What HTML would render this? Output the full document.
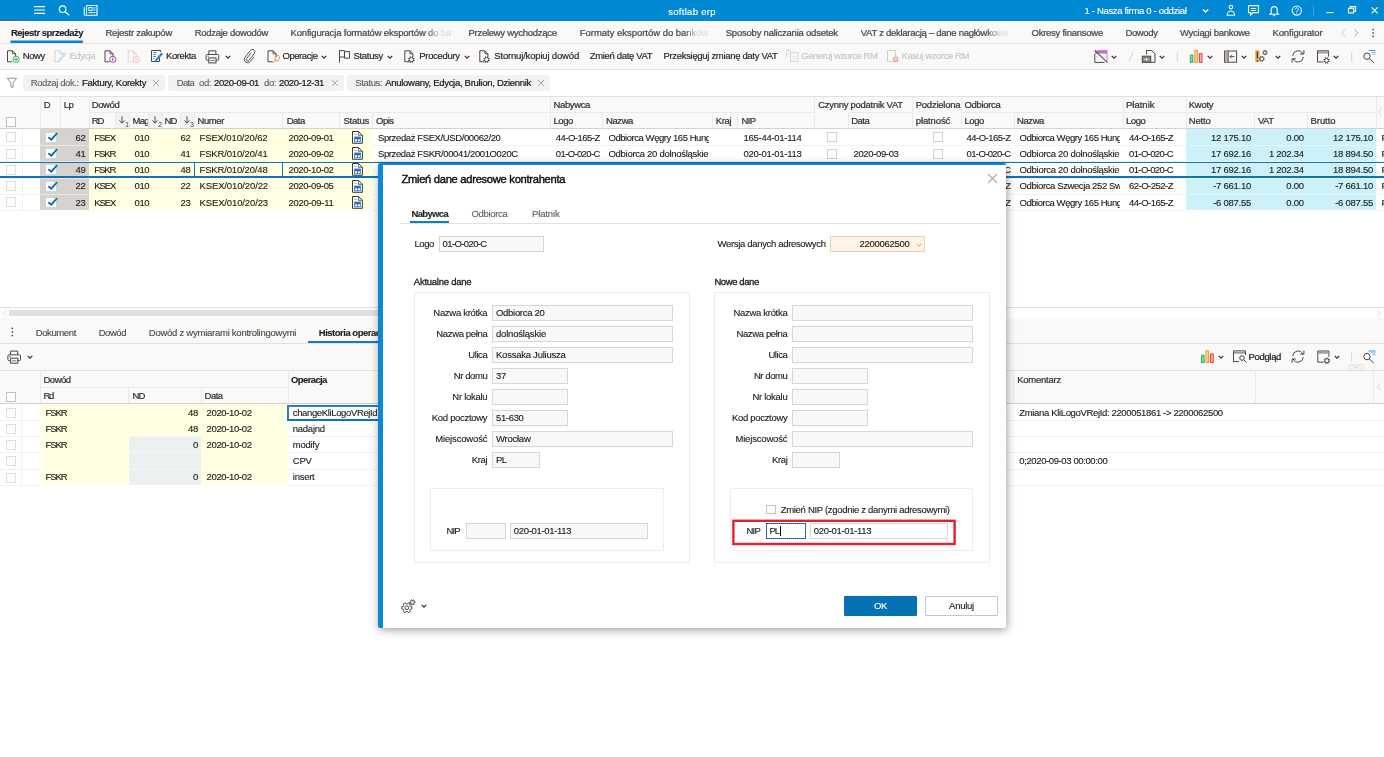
<!DOCTYPE html>
<html lang="pl"><head><meta charset="utf-8"><title>softlab erp</title>
<style>
html,body{margin:0;padding:0}
body{will-change:transform;width:1384px;height:757px;position:relative;overflow:hidden;background:#fff;font:9.5px "Liberation Sans",sans-serif;color:#1b1a19}
.a{position:absolute;box-sizing:border-box}
.t{position:absolute;white-space:nowrap;line-height:12px;height:12px;-webkit-text-stroke:0.12px currentColor}
.m{-webkit-text-stroke:0.22px currentColor}
.g{color:#605e5c}
.d{color:#c2c0be}
.w{color:#fff}
.in{border:1px solid #d8d6d4;background:#f8f8f8}
.cb{border:1px solid #c8c6c4;background:#fff}
</style></head>
<body>
<div class="a " style="left:0px;top:0px;width:1384px;height:21px;background:#0089d2;"></div>
<div class="a " style="left:0px;top:20px;width:27px;height:1px;background:#4a6478;"></div>
<div class="a " style="left:0px;top:21px;width:1384px;height:49px;background:#faf9f8;"></div>
<div class="a " style="left:0px;top:43px;width:1384px;height:1px;background:#e3e1df;"></div>
<div class="a " style="left:0px;top:69px;width:1384px;height:1px;background:#e3e1df;"></div>
<span class="t w" style="letter-spacing:0.294px;left:640px;width:104px;text-align:center;top:5.5px;">softlab erp</span>
<span class="t w" style="letter-spacing:-0.329px;left:1084.5px;top:5.4px;">1 - Nasza firma 0 - oddział</span>
<span class="t " style="letter-spacing:-0.517px;font-weight:bold;left:11px;top:26.7px;color:#201f1e">Rejestr sprzedaży</span>
<svg class="a" style="left:9px;top:39px;" width="78" height="6" viewBox="0 0 78 6"><rect x="1.3" y="1.4" width="72.8" height="2.6" rx="0.9" fill="#0a84d0"/></svg>
<span class="t m" style="letter-spacing:-0.248px;left:105.5px;top:26.7px;color:#484644">Rejestr zakupów</span>
<span class="t m" style="letter-spacing:-0.292px;left:194.75px;top:26.7px;color:#484644">Rodzaje dowodów</span>
<span class="t m" style="letter-spacing:-0.274px;left:468.5px;top:26.7px;color:#484644">Przelewy wychodzące</span>
<span class="t m" style="letter-spacing:-0.222px;left:725.75px;top:26.7px;color:#484644">Sposoby naliczania odsetek</span>
<span class="t m" style="letter-spacing:-0.250px;left:1031.5px;top:26.7px;color:#484644">Okresy finansowe</span>
<span class="t m" style="letter-spacing:-0.387px;left:1125.5px;top:26.7px;color:#484644">Dowody</span>
<span class="t m" style="letter-spacing:-0.273px;left:1180px;top:26.7px;color:#484644">Wyciągi bankowe</span>
<span class="t m" style="letter-spacing:-0.146px;left:1272.5px;top:26.7px;color:#484644">Konfigurator</span>
<span class="t m" style="left:290.5px;top:26.7px;letter-spacing:-0.172px;color:#484644;-webkit-mask-image:linear-gradient(90deg,#000 135.5px,rgba(0,0,0,.14) 149.5px);mask-image:linear-gradient(90deg,#000 135.5px,rgba(0,0,0,.14) 149.5px)">Konfiguracja formatów eksportów do ba</span>
<span class="t m" style="left:579.75px;top:26.7px;letter-spacing:-0.028px;color:#484644;-webkit-mask-image:linear-gradient(90deg,#000 104.25px,rgba(0,0,0,.14) 117.25px);mask-image:linear-gradient(90deg,#000 104.25px,rgba(0,0,0,.14) 117.25px)">Formaty eksportów do banków</span>
<span class="t m" style="left:860.75px;top:26.7px;letter-spacing:-0.275px;color:#484644;-webkit-mask-image:linear-gradient(90deg,#000 125.25px,rgba(0,0,0,.14) 139.25px);mask-image:linear-gradient(90deg,#000 125.25px,rgba(0,0,0,.14) 139.25px)">VAT z deklaracją – dane nagłówkowe</span>
<svg class="a" style="left:1340px;top:27px;" width="40" height="12" viewBox="0 0 40 12"><path d="M5.2 2.2 L2 6 L5.2 9.8" fill="none" stroke="#d0cecc" stroke-width="1"/><path d="M14.5 2.2 L17.7 6 L14.5 9.8" fill="none" stroke="#b3b0ad" stroke-width="1"/><g fill="#484644"><rect x="32.4" y="1.8" width="1.5" height="1.5"/><rect x="32.4" y="5.2" width="1.5" height="1.5"/><rect x="32.4" y="8.6" width="1.5" height="1.5"/></g></svg>
<svg class="a" style="left:32px;top:3px;" width="70" height="16" viewBox="0 0 70 16"><g stroke="#fff" fill="none" stroke-width="1.1"><path d="M2 3.6H13M2 7H13M2 10.4H13"/><circle cx="30.6" cy="6.2" r="3.3"/><path d="M33 8.8L37.3 12.3"/><path d="M54.5 2.5H65V12.3H53.5a1.3 1.3 0 0 1-1.3-1.3V4.2"/><path d="M54.5 2.5V11"/><rect x="56.8" y="4.6" width="3.2" height="2.8" stroke-width="0.9"/><path d="M61.3 4.9H63.6M61.3 7H63.6M56.6 9.6H63.6" stroke-width="0.9"/></g></svg>
<svg class="a" style="left:1198px;top:2px;" width="186" height="18" viewBox="0 0 186 18"><g stroke="#fff" fill="none" stroke-width="1.1"><path d="M5 7.6L7.6 10L10.2 7.6" stroke-width="1.4"/><circle cx="32.9" cy="5.1" r="1.75"/><path d="M29.2 13.3a3.7 4.3 0 0 1 7.4 0Z"/><path d="M50.5 3.6H60.5V10.6H55L52.6 12.9V10.6H50.5Z"/><path d="M52.8 6.5H58.2M52.8 8.5H58.2" stroke-width="0.9"/><path d="M73.2 11V7.6a3 3 0 0 1 6 0V11L80.4 12.2H72Z"/><path d="M75.4 13.6H77"/><circle cx="98.8" cy="8.6" r="4.6"/><path d="M97.4 7.3a1.5 1.5 0 1 1 2.3 1.3c-.6.4-.9.7-.9 1.5" stroke-width="0.9"/><circle cx="98.8" cy="11.4" r="0.3" stroke-width="0.7"/><path d="M115.5 3.5V14.5" stroke="#3fa4dd" stroke-width="1"/><path d="M128.5 10.6H135.5"/><rect x="150.5" y="6.3" width="5.2" height="4.6"/><path d="M152.3 6.3V4.6H157.6V9.2H155.7"/><path d="M173.6 5.4L179.6 11.4M179.6 5.4L173.6 11.4"/></g></svg>
<svg class="a" style="left:0px;top:44px;" width="1000" height="26" viewBox="0 0 1000 26"><path d="M12.2 17.8 H7.5 V6.8 H12.6 L15.6 9.8 V12.9" fill="none" stroke="#4a4846" stroke-width="1"/><path d="M12.6 6.8 V9.8 H15.6" fill="none" stroke="#4a4846" stroke-width="0.9"/><circle cx="16" cy="15.3" r="3.1" fill="#fff" stroke="#2db553" stroke-width="1"/><path d="M16 13.4V17.2M14.1 15.3H17.9" stroke="#2db553" stroke-width="1"/><path d="M59.5 17.8 H54.8 V6.8 H59.9 L62.9 9.8 V12.9" fill="none" stroke="#d2d0ce" stroke-width="1"/><path d="M59.9 6.8 V9.8 H62.9" fill="none" stroke="#d2d0ce" stroke-width="0.9"/><path d="M58.5 17.6L59.2 15.2L64.6 8.4L66.2 9.7L60.8 16.5Z" fill="#d8ecf8" stroke="#b5d8f0" stroke-width="0.8"/><path d="M109.7 17.8 H105 V6.8 H110.1 L113.1 9.8 V12.9" fill="none" stroke="#4a4846" stroke-width="1"/><path d="M110.1 6.8 V9.8 H113.1" fill="none" stroke="#4a4846" stroke-width="0.9"/><circle cx="112.8" cy="15.3" r="3.1" fill="#fff" stroke="#a33fb5" stroke-width="1"/><path d="M112.8 13.6V17" stroke="#a33fb5" stroke-width="1.1"/><path d="M132.9 17.8 H128.2 V6.8 H133.3 L136.3 9.8 V12.9" fill="none" stroke="#d9d7d5" stroke-width="1"/><path d="M133.3 6.8 V9.8 H136.3" fill="none" stroke="#d9d7d5" stroke-width="0.9"/><circle cx="136.2" cy="15.3" r="3.1" fill="#fff" stroke="#f5b8b8" stroke-width="1"/><path d="M134.8 13.9L137.6 16.7M137.6 13.9L134.8 16.7" stroke="#f5b8b8" stroke-width="0.9"/><path d="M159.5 13.5V17.5H151.5V6.5H160.5V8" fill="none" stroke="#4a4846" stroke-width="1"/><path d="M153.2 8.5H156.6M153.2 10.5H155.6M153.2 12.5H156.2M153.2 14.5H154.6" stroke="#2f7fd0" stroke-width="0.9"/><path d="M154.6 18L155.4 15.4L161.4 8.6L163 10L157 16.8Z" fill="#2f7fd0"/><path d="M208.8 10.5V6.8H215.9V10.5" fill="none" stroke="#4a4846"/><rect x="206.1" y="10.5" width="12.6" height="5.8" rx="1.2" fill="none" stroke="#4a4846"/><rect x="208.8" y="13.9" width="7.2" height="5" fill="#faf9f8" stroke="#4a4846"/><path d="M210.2 16.5H214.6" stroke="#8a8886" stroke-width="1.2"/><path d="M207.4 12.2H209" stroke="#2f8fe0" stroke-width="0.9"/><path d="M251.2 9.2L246.6 15.2a1.5 1.5 0 0 0 2.4 1.8L254.4 10a2.5 2.5 0 0 0-4-3L244.8 14.2a3.4 3.4 0 0 0 5.4 4.1L254 13.4" fill="none" stroke="#4a4846" stroke-width="0.9" transform="translate(0,-0.6)"/><path d="M272.7 17.8 H268 V6.8 H273.1 L276.1 9.8 V12.9" fill="none" stroke="#4a4846" stroke-width="1"/><path d="M273.1 6.8 V9.8 H276.1" fill="none" stroke="#4a4846" stroke-width="0.9"/><path d="M275.2 14.3a2.2 2.2 0 1 1 3.4 1.2L277.4 17.2L275 15.8ZM275.4 16.4L273 18.6" fill="none" stroke="#f08324" stroke-width="1"/><path d="M339.5 6.2V18.6" stroke="#4a4846" stroke-width="1"/><path d="M339.5 6.6H344.5V7.6H349.5V14.2H344.5V13H339.5M344.5 7.6V13" fill="none" stroke="#4a4846" stroke-width="1"/><path d="M409.5 17.8 H404.8 V6.8 H409.9 L412.9 9.8 V12.9" fill="none" stroke="#4a4846" stroke-width="1"/><path d="M409.9 6.8 V9.8 H412.9" fill="none" stroke="#4a4846" stroke-width="0.9"/><circle cx="411.4" cy="15.6" r="2.1" fill="none" stroke="#4a4846" stroke-width="0.9"/><path d="M413.34 16.40L414.45 16.86M412.20 17.54L412.66 18.65M410.60 17.54L410.14 18.65M409.46 16.40L408.35 16.86M409.46 14.80L408.35 14.34M410.60 13.66L410.14 12.55M412.20 13.66L412.66 12.55M413.34 14.80L414.45 14.34" stroke="#4a4846" stroke-width="1.17" fill="none"/><path d="M484.5 17.8 H479.8 V6.8 H484.9 L487.9 9.8 V12.9" fill="none" stroke="#4a4846" stroke-width="1"/><path d="M484.9 6.8 V9.8 H487.9" fill="none" stroke="#4a4846" stroke-width="0.9"/><circle cx="486.6" cy="15.6" r="2.1" fill="none" stroke="#4a4846" stroke-width="0.9"/><path d="M488.54 16.40L489.65 16.86M487.40 17.54L487.86 18.65M485.80 17.54L485.34 18.65M484.66 16.40L483.55 16.86M484.66 14.80L483.55 14.34M485.80 13.66L485.34 12.55M487.40 13.66L487.86 12.55M488.54 14.80L489.65 14.34" stroke="#4a4846" stroke-width="1.17" fill="none"/><path d="M790.5 12V6.5H786.3V12.6" fill="none" stroke="#d9d7d5"/><rect x="790.5" y="8.6" width="7.6" height="9" fill="#faf9f8" stroke="#d9d7d5"/><path d="M787.6 8.6H789.2M787.6 10.4H789.2M792.2 12.6H796.4" stroke="#c9def0" stroke-width="0.8"/><path d="M792.2 14.8H796.4" stroke="#c9def0" stroke-width="0.8"/><path d="M892.3 17.5H887.5V6.5H895.6V12" fill="none" stroke="#cfcdcb"/><rect x="892.8" y="12.4" width="5.6" height="5.6" rx="1.6" fill="#f4a79b"/><path d="M894.4 14L896.8 16.4M896.8 14L894.4 16.4" stroke="#fff" stroke-width="0.9"/></svg>
<span class="t m" style="letter-spacing:-0.439px;left:22.8px;top:50.3px;color:#252423;-webkit-text-stroke-width:0.17px">Nowy</span>
<span class="t " style="letter-spacing:-0.502px;left:69.5px;top:50.3px;color:#c8c6c4;-webkit-text-stroke-width:0.17px">Edycja</span>
<span class="t m" style="letter-spacing:-0.392px;left:166px;top:50.3px;color:#252423;-webkit-text-stroke-width:0.17px">Korekta</span>
<span class="t m" style="letter-spacing:-0.444px;left:282.5px;top:50.3px;color:#252423;-webkit-text-stroke-width:0.17px">Operacje</span>
<span class="t m" style="letter-spacing:-0.312px;left:353.5px;top:50.3px;color:#252423;-webkit-text-stroke-width:0.17px">Statusy</span>
<span class="t m" style="letter-spacing:-0.311px;left:419.25px;top:50.3px;color:#252423;-webkit-text-stroke-width:0.17px">Procedury</span>
<span class="t m" style="letter-spacing:-0.172px;left:494.25px;top:50.3px;color:#252423;-webkit-text-stroke-width:0.17px">Stornuj/kopiuj dowód</span>
<span class="t m" style="letter-spacing:-0.338px;left:589.75px;top:50.3px;color:#252423;-webkit-text-stroke-width:0.17px">Zmień datę VAT</span>
<span class="t m" style="letter-spacing:-0.321px;left:663.5px;top:50.3px;color:#252423;-webkit-text-stroke-width:0.17px">Przeksięguj zmianę daty VAT</span>
<span class="t " style="letter-spacing:-0.453px;left:801.25px;top:50.3px;color:#c8c6c4;-webkit-text-stroke-width:0.17px">Generuj wzorce RM</span>
<span class="t " style="letter-spacing:-0.427px;left:901.5px;top:50.3px;color:#c8c6c4;-webkit-text-stroke-width:0.17px">Kasuj wzorce RM</span>
<svg class="a" style="left:223.6px;top:52.9px;" width="8" height="8" viewBox="0 0 8 8"><path d="M1.7 2.8 L4 5.2 L6.3 2.8" fill="none" stroke="#323130" stroke-width="1.2"/></svg>
<svg class="a" style="left:319.8px;top:52.9px;" width="8" height="8" viewBox="0 0 8 8"><path d="M1.7 2.8 L4 5.2 L6.3 2.8" fill="none" stroke="#323130" stroke-width="1.2"/></svg>
<svg class="a" style="left:385.8px;top:52.9px;" width="8" height="8" viewBox="0 0 8 8"><path d="M1.7 2.8 L4 5.2 L6.3 2.8" fill="none" stroke="#323130" stroke-width="1.2"/></svg>
<svg class="a" style="left:462.6px;top:52.9px;" width="8" height="8" viewBox="0 0 8 8"><path d="M1.7 2.8 L4 5.2 L6.3 2.8" fill="none" stroke="#323130" stroke-width="1.2"/></svg>
<svg class="a" style="left:0px;top:44px;" width="1384" height="26" viewBox="0 0 1384 26"><rect x="1095" y="6.6" width="12" height="3" fill="#c66fc9"/><path d="M1097.6 6.6H1107V17" fill="none" stroke="#c66fc9" stroke-width="0.9"/><path d="M1094.8 9.8V18.4H1104.6" fill="none" stroke="#4a4846"/><path d="M1094.6 6.4L1107.6 18.6" stroke="#4a4846" stroke-width="1.1"/><path d="M1095.4 11V14H1098.6Z" fill="#d2d0ce"/><path d="M1133.3 8L1129.2 17.3" stroke="#d6d4d2" stroke-width="1"/><path d="M1146.5 10.4V6.5H1151.6L1155 9.9V18.3H1151" fill="none" stroke="#4a4846"/><rect x="1142.3" y="12.2" width="8.4" height="6.2" fill="#8a8886" stroke="#4a4846"/><path d="M1143.8 15.4H1149.2M1146.5 14V16.8" stroke="#e1dfdd" stroke-width="0.9"/><path d="M1177.3 8V17.6" stroke="#d6d4d2"/><rect x="1190.3" y="11.1" width="2.6" height="7.2" fill="#8fd8a6" stroke="#21a84a" stroke-width="0.9"/><rect x="1194.8" y="6.6" width="2.6" height="11.7" fill="#fbd79a" stroke="#f08a24" stroke-width="0.9"/><rect x="1199.4" y="9.7" width="2.6" height="8.6" fill="#f7b4b4" stroke="#e8282c" stroke-width="0.9"/><rect x="1224.6" y="7" width="12" height="11.2" fill="none" stroke="#4a4846"/><rect x="1225" y="7.4" width="3" height="10.4" fill="#b3b0ad"/><path d="M1228.2 7V18.2" stroke="#4a4846" stroke-width="0.9"/><path d="M1230 12.6H1234.6M1231.8 10.8L1230 12.6L1231.8 14.4" fill="none" stroke="#4a4846" stroke-width="0.9"/><rect x="1255.2" y="6.2" width="4.4" height="11.6" fill="#e9b653"/><path d="M1257.4 7.4V14.6M1257.4 16.2V17.8" stroke="#3b3a39" stroke-width="1.3"/><circle cx="1265" cy="8.6" r="1.6" fill="none" stroke="#4a4846" stroke-width="0.8"/><path d="M1266.48 9.21L1267.40 9.59M1265.61 10.08L1265.99 11.00M1264.39 10.08L1264.01 11.00M1263.52 9.21L1262.60 9.59M1263.52 7.99L1262.60 7.61M1264.39 7.12L1264.01 6.20M1265.61 7.12L1265.99 6.20M1266.48 7.99L1267.40 7.61" stroke="#4a4846" stroke-width="1.04" fill="none"/><circle cx="1261.8" cy="14.8" r="1.9" fill="none" stroke="#4a4846" stroke-width="0.8"/><path d="M1263.56 15.53L1264.48 15.91M1262.53 16.56L1262.91 17.48M1261.07 16.56L1260.69 17.48M1260.04 15.53L1259.12 15.91M1260.04 14.07L1259.12 13.69M1261.07 13.04L1260.69 12.12M1262.53 13.04L1262.91 12.12M1263.56 14.07L1264.48 13.69" stroke="#4a4846" stroke-width="1.04" fill="none"/><path d="M1292.7 11.8A5.3 5.3 0 0 1 1302.88 10.1" fill="none" stroke="#4a4846"/><path d="M1303.9 6.2V10H1300.1" fill="none" stroke="#4a4846"/><path d="M1303.3 13A5.3 5.3 0 0 1 1293.12 14.7" fill="none" stroke="#4a4846"/><path d="M1292.1 18.6V14.8H1295.9" fill="none" stroke="#4a4846"/><path d="M1323.2 18H1317.5V6.8H1328.6V12.5" fill="none" stroke="#4a4846"/><rect x="1318" y="7.3" width="10.2" height="2.2" fill="#a19f9d"/><circle cx="1326.6" cy="16.5" r="2" fill="none" stroke="#4a4846" stroke-width="0.9"/><path d="M1328.45 17.27L1329.56 17.72M1327.37 18.35L1327.82 19.46M1325.83 18.35L1325.38 19.46M1324.75 17.27L1323.64 17.72M1324.75 15.73L1323.64 15.28M1325.83 14.65L1325.38 13.54M1327.37 14.65L1327.82 13.54M1328.45 15.73L1329.56 15.28" stroke="#4a4846" stroke-width="1.17" fill="none"/><path d="M1351.7 8V17.6" stroke="#d6d4d2"/><circle cx="1367" cy="12.2" r="3.2" fill="none" stroke="#4a4846"/><path d="M1369.3 14.504L1373.8 18.8" stroke="#4a4846"/><path d="M1368.6 6.6H1375.6" stroke="#3a96e0" stroke-width="1"/><path d="M1371 8.4H1375.6M1372.6 10.2H1375.6" stroke="#7fbbea" stroke-width="1"/></svg>
<svg class="a" style="left:1109.8px;top:52.9px;" width="8" height="8" viewBox="0 0 8 8"><path d="M1.7 2.8 L4 5.2 L6.3 2.8" fill="none" stroke="#323130" stroke-width="1.2"/></svg>
<svg class="a" style="left:1158px;top:52.9px;" width="8" height="8" viewBox="0 0 8 8"><path d="M1.7 2.8 L4 5.2 L6.3 2.8" fill="none" stroke="#323130" stroke-width="1.2"/></svg>
<svg class="a" style="left:1205.8px;top:52.9px;" width="8" height="8" viewBox="0 0 8 8"><path d="M1.7 2.8 L4 5.2 L6.3 2.8" fill="none" stroke="#323130" stroke-width="1.2"/></svg>
<svg class="a" style="left:1239.5px;top:52.9px;" width="8" height="8" viewBox="0 0 8 8"><path d="M1.7 2.8 L4 5.2 L6.3 2.8" fill="none" stroke="#323130" stroke-width="1.2"/></svg>
<svg class="a" style="left:1273.5px;top:52.9px;" width="8" height="8" viewBox="0 0 8 8"><path d="M1.7 2.8 L4 5.2 L6.3 2.8" fill="none" stroke="#323130" stroke-width="1.2"/></svg>
<svg class="a" style="left:1332px;top:52.9px;" width="8" height="8" viewBox="0 0 8 8"><path d="M1.7 2.8 L4 5.2 L6.3 2.8" fill="none" stroke="#323130" stroke-width="1.2"/></svg>
<div class="a " style="left:0px;top:70px;width:1384px;height:27px;background:#fff;"></div>
<svg class="a" style="left:5px;top:76px;" width="14" height="14" viewBox="0 0 14 14"><path d="M2.2 2.2H11.6L8 6.8V11.6L5.8 10.4V6.8Z" fill="none" stroke="#8a8886" stroke-width="0.9"/></svg>
<div class="a " style="left:23px;top:75px;width:141.8px;height:15.6px;background:#f3f2f1;border-radius:2px"></div>
<span class="t g" style="letter-spacing:-0.401px;left:30.75px;top:76.8px;">Rodzaj dok.:</span>
<span class="t m" style="letter-spacing:-0.266px;left:82px;top:76.8px;">Faktury, Korekty</span>
<svg class="a" style="left:151.2px;top:77.8px;" width="10" height="10" viewBox="0 0 10 10"><path d="M2 2L8 8M8 2L2 8" stroke="#a19f9d" stroke-width="0.9"/></svg>
<div class="a " style="left:168px;top:75px;width:175.5px;height:15.6px;background:#f3f2f1;border-radius:2px"></div>
<span class="t g" style="letter-spacing:-0.642px;left:176.75px;top:76.8px;">Data</span>
<span class="t g" style="letter-spacing:-0.402px;left:199px;top:76.8px;">od:</span>
<span class="t m" style="letter-spacing:-0.360px;left:214px;top:76.8px;">2020-09-01</span>
<span class="t g" style="letter-spacing:-0.402px;left:264px;top:76.8px;">do:</span>
<span class="t m" style="letter-spacing:-0.360px;left:279px;top:76.8px;">2020-12-31</span>
<svg class="a" style="left:330px;top:77.8px;" width="10" height="10" viewBox="0 0 10 10"><path d="M2 2L8 8M8 2L2 8" stroke="#a19f9d" stroke-width="0.9"/></svg>
<div class="a " style="left:347.3px;top:75px;width:202.5px;height:15.6px;background:#f3f2f1;border-radius:2px"></div>
<span class="t g" style="letter-spacing:-0.367px;left:355.25px;top:76.8px;">Status:</span>
<span class="t m" style="letter-spacing:-0.288px;left:385.25px;top:76.8px;">Anulowany, Edycja, Brulion, Dziennik</span>
<svg class="a" style="left:535.6px;top:77.8px;" width="10" height="10" viewBox="0 0 10 10"><path d="M2 2L8 8M8 2L2 8" stroke="#a19f9d" stroke-width="0.9"/></svg>
<div class="a " style="left:0px;top:96px;width:1384px;height:33px;background:#faf9f8;"></div>
<div class="a " style="left:0px;top:96px;width:1384px;height:1px;background:#e3e1df;"></div>
<div class="a " style="left:0px;top:128px;width:1384px;height:1px;background:#d4d2d0;"></div>
<div class="a " style="left:88.75px;top:112px;width:725.75px;height:1px;background:#ebeae8;"></div>
<div class="a " style="left:847.5px;top:112px;width:64.5px;height:1px;background:#ebeae8;"></div>
<div class="a " style="left:960.75px;top:112px;width:415.25px;height:1px;background:#ebeae8;"></div>
<div class="a " style="left:40px;top:97px;width:1px;height:31px;background:#ebeae8;"></div>
<div class="a " style="left:60px;top:97px;width:1px;height:31px;background:#ebeae8;"></div>
<div class="a " style="left:89px;top:97px;width:1px;height:31px;background:#ebeae8;"></div>
<div class="a " style="left:550px;top:97px;width:1px;height:31px;background:#ebeae8;"></div>
<div class="a " style="left:814px;top:97px;width:1px;height:31px;background:#ebeae8;"></div>
<div class="a " style="left:912px;top:97px;width:1px;height:31px;background:#ebeae8;"></div>
<div class="a " style="left:961px;top:97px;width:1px;height:31px;background:#ebeae8;"></div>
<div class="a " style="left:1123px;top:97px;width:1px;height:31px;background:#ebeae8;"></div>
<div class="a " style="left:1186px;top:97px;width:1px;height:31px;background:#ebeae8;"></div>
<div class="a " style="left:1376px;top:97px;width:1px;height:31px;background:#ebeae8;"></div>
<div class="a " style="left:115px;top:113px;width:1px;height:15px;background:#ebeae8;"></div>
<div class="a " style="left:129px;top:113px;width:1px;height:15px;background:#ebeae8;"></div>
<div class="a " style="left:148px;top:113px;width:1px;height:15px;background:#ebeae8;"></div>
<div class="a " style="left:162px;top:113px;width:1px;height:15px;background:#ebeae8;"></div>
<div class="a " style="left:180px;top:113px;width:1px;height:15px;background:#ebeae8;"></div>
<div class="a " style="left:194px;top:113px;width:1px;height:15px;background:#ebeae8;"></div>
<div class="a " style="left:282px;top:113px;width:1px;height:15px;background:#ebeae8;"></div>
<div class="a " style="left:339px;top:113px;width:1px;height:15px;background:#ebeae8;"></div>
<div class="a " style="left:372px;top:113px;width:1px;height:15px;background:#ebeae8;"></div>
<div class="a " style="left:602px;top:113px;width:1px;height:15px;background:#ebeae8;"></div>
<div class="a " style="left:712px;top:113px;width:1px;height:15px;background:#ebeae8;"></div>
<div class="a " style="left:737px;top:113px;width:1px;height:15px;background:#ebeae8;"></div>
<div class="a " style="left:848px;top:113px;width:1px;height:15px;background:#ebeae8;"></div>
<div class="a " style="left:1014px;top:113px;width:1px;height:15px;background:#ebeae8;"></div>
<div class="a " style="left:1254px;top:113px;width:1px;height:15px;background:#ebeae8;"></div>
<div class="a " style="left:1307px;top:113px;width:1px;height:15px;background:#ebeae8;"></div>
<span class="t m" style="letter-spacing:-0.861px;left:43.75px;top:98.6px;color:#323130">D</span>
<span class="t m" style="letter-spacing:-0.534px;left:63.75px;top:98.6px;color:#323130">Lp</span>
<span class="t m" style="letter-spacing:-0.414px;left:91.75px;top:98.6px;color:#323130">Dowód</span>
<span class="t m" style="letter-spacing:-0.367px;left:553.5px;top:98.6px;color:#323130">Nabywca</span>
<span class="t m" style="letter-spacing:-0.286px;left:818.25px;top:98.6px;color:#323130">Czynny podatnik VAT</span>
<span class="t m" style="letter-spacing:-0.251px;left:915.75px;top:98.6px;color:#323130">Podzielona</span>
<span class="t m" style="letter-spacing:-0.319px;left:964.5px;top:98.6px;color:#323130">Odbiorca</span>
<span class="t m" style="letter-spacing:-0.002px;left:1126px;top:98.6px;color:#323130">Płatnik</span>
<span class="t m" style="letter-spacing:-0.274px;left:1188.75px;top:98.6px;color:#323130">Kwoty</span>
<span class="t m" style="letter-spacing:-1.111px;left:91.75px;top:114.6px;color:#323130">RD</span>
<span class="t m" style="left:132.5px;top:114.6px;width:15px;overflow:hidden;letter-spacing:-0.7px;color:#323130">Mag</span>
<span class="t m" style="letter-spacing:-0.861px;left:164.5px;top:114.6px;color:#323130">ND</span>
<span class="t m" style="letter-spacing:-0.401px;left:197.5px;top:114.6px;color:#323130">Numer</span>
<span class="t m" style="letter-spacing:-0.517px;left:286.75px;top:114.6px;color:#323130">Data</span>
<span class="t m" style="letter-spacing:-0.239px;left:343.5px;top:114.6px;color:#323130">Status</span>
<span class="t m" style="letter-spacing:-0.508px;left:376px;top:114.6px;color:#323130">Opis</span>
<span class="t m" style="letter-spacing:-0.409px;left:553.5px;top:114.6px;color:#323130">Logo</span>
<span class="t m" style="letter-spacing:-0.408px;left:606px;top:114.6px;color:#323130">Nazwa</span>
<span class="t m" style="letter-spacing:-0.349px;left:715.75px;top:114.6px;color:#323130">Kraj</span>
<span class="t m" style="letter-spacing:-0.612px;left:741.5px;top:114.6px;color:#323130">NIP</span>
<span class="t m" style="letter-spacing:-0.517px;left:851.25px;top:114.6px;color:#323130">Data</span>
<span class="t m" style="letter-spacing:-0.111px;left:915.75px;top:114.6px;color:#323130">płatność</span>
<span class="t m" style="letter-spacing:-0.409px;left:964.5px;top:114.6px;color:#323130">Logo</span>
<span class="t m" style="letter-spacing:-0.408px;left:1017px;top:114.6px;color:#323130">Nazwa</span>
<span class="t m" style="letter-spacing:-0.409px;left:1126px;top:114.6px;color:#323130">Logo</span>
<span class="t m" style="letter-spacing:-0.141px;left:1188.75px;top:114.6px;color:#323130">Netto</span>
<span class="t m" style="letter-spacing:-0.522px;left:1258px;top:114.6px;color:#323130">VAT</span>
<span class="t m" style="letter-spacing:-0.058px;left:1310.5px;top:114.6px;color:#323130">Brutto</span>
<div class="a " style="left:116px;top:113px;width:13px;height:15px;background:#f3f2f1;"></div>
<svg class="a" style="left:117px;top:114px;" width="14" height="14" viewBox="0 0 14 14"><path d="M5 2.4V9M2.4 6.4L5 9.2L7.6 6.4" fill="none" stroke="#484644" stroke-width="0.95"/><text x="8.2" y="12.6" font-size="6.6" fill="#3b3a39" font-family="Liberation Sans, sans-serif">1</text></svg>
<div class="a " style="left:149px;top:113px;width:13px;height:15px;background:#f3f2f1;"></div>
<svg class="a" style="left:149.6px;top:114px;" width="14" height="14" viewBox="0 0 14 14"><path d="M5 2.4V9M2.4 6.4L5 9.2L7.6 6.4" fill="none" stroke="#484644" stroke-width="0.95"/><text x="8.2" y="12.6" font-size="6.6" fill="#3b3a39" font-family="Liberation Sans, sans-serif">2</text></svg>
<div class="a " style="left:181px;top:113px;width:12px;height:15px;background:#f3f2f1;"></div>
<svg class="a" style="left:182px;top:114px;" width="14" height="14" viewBox="0 0 14 14"><path d="M5 2.4V9M2.4 6.4L5 9.2L7.6 6.4" fill="none" stroke="#484644" stroke-width="0.95"/><text x="8.2" y="12.6" font-size="6.6" fill="#3b3a39" font-family="Liberation Sans, sans-serif">3</text></svg>
<div class="a " style="left:6px;top:117px;width:10px;height:10px;background:#fff;border:1px solid #c2c0be"></div>
<svg class="a" style="left:1376px;top:106px;" width="8" height="12" viewBox="0 0 8 12"><path d="M5.6 2.6L2.4 6L5.6 9.4" fill="none" stroke="#d0cecc" stroke-width="0.9"/></svg>
<div class="a " style="left:40px;top:129px;width:49px;height:16px;background:#d6d3ce;"></div>
<div class="a " style="left:89px;top:129px;width:283.5px;height:16px;background:#ffffe1;"></div>
<div class="a " style="left:1186px;top:129px;width:190px;height:16px;background:#ccf1f8;"></div>
<div class="a " style="left:6px;top:132px;width:10px;height:10px;background:#fff;border:1px solid #dedddb"></div>
<div class="a " style="left:22px;top:129px;width:1px;height:16px;background:#f1f0ef;"></div>
<div class="a " style="left:46px;top:132.5px;width:10px;height:9px;background:#fff;"></div>
<svg class="a" style="left:45px;top:131px;" width="14" height="12" viewBox="0 0 14 12"><path d="M3.4 6.2L6.3 8.7L12.1 2.1" fill="none" stroke="#0d72b9" stroke-width="2"/></svg>
<span class="t " style="letter-spacing:-0.26px;right:1298.5px;top:131.5px;">62</span>
<span class="t " style="letter-spacing:-0.953px;left:94.25px;top:131.5px;">FSEX</span>
<span class="t " style="letter-spacing:-0.367px;left:134.5px;top:131.5px;">010</span>
<span class="t " style="letter-spacing:-0.26px;right:1193.5px;top:131.5px;">62</span>
<span class="t " style="letter-spacing:-0.123px;left:199.5px;top:131.5px;">FSEX/010/20/62</span>
<span class="t " style="letter-spacing:-0.360px;left:288.5px;top:131.5px;">2020-09-01</span>
<svg class="a" style="left:351px;top:129.7px;" width="13" height="15" viewBox="0 0 13 15"><path d="M1.5 13.3V1.5H7.6L11.4 5.3V13.3Z" fill="#fff" stroke="#3b3a39" stroke-width="1"/><path d="M7.6 1.5V5.3H11.4" fill="none" stroke="#3b3a39" stroke-width="0.8"/><path d="M3.4 4.4H6" stroke="#a19f9d" stroke-width="0.9"/><rect x="3.2" y="6.6" width="6.6" height="5.6" fill="#2b6fc2"/><rect x="4" y="9.4" width="2.2" height="1.9" fill="#fff"/><rect x="6.9" y="9.4" width="2.2" height="1.9" fill="#fff"/></svg>
<span class="t " style="letter-spacing:-0.387px;left:378px;top:131.5px;">Sprzedaż FSEX/USD/00062/20</span>
<span class="t " style="letter-spacing:-0.510px;left:555.75px;top:131.5px;">44-O-165-Z</span>
<span class="t " style="left:608.5px;top:131.5px;width:100.6px;overflow:hidden;letter-spacing:-0.452px;">Odbiorca Węgry 165 Hungary</span>
<span class="t " style="letter-spacing:-0.279px;left:743.5px;top:131.5px;">165-44-01-114</span>
<div class="a " style="left:827px;top:132px;width:10px;height:10px;background:#fff;border:1px solid #d2d0ce"></div>
<div class="a " style="left:933px;top:132px;width:10px;height:10px;background:#fff;border:1px solid #d2d0ce"></div>
<span class="t " style="letter-spacing:-0.510px;left:966.5px;top:131.5px;">44-O-165-Z</span>
<span class="t " style="left:1019.5px;top:131.5px;width:100.6px;overflow:hidden;letter-spacing:-0.452px;">Odbiorca Węgry 165 Hungary</span>
<span class="t " style="letter-spacing:-0.510px;left:1129px;top:131.5px;">44-O-165-Z</span>
<span class="t " style="letter-spacing:-0.26px;right:133px;top:131.5px;">12 175.10</span>
<span class="t " style="letter-spacing:-0.26px;right:80.2px;top:131.5px;">0.00</span>
<span class="t " style="letter-spacing:-0.26px;right:11px;top:131.5px;">12 175.10</span>
<span class="t " style="left:1381.5px;top:131.5px;width:3px;overflow:hidden;">FSEX</span>
<div class="a " style="left:40px;top:145px;width:49px;height:16px;background:#d6d3ce;"></div>
<div class="a " style="left:89px;top:145px;width:283.5px;height:16px;background:#ffffe1;"></div>
<div class="a " style="left:1186px;top:145px;width:190px;height:16px;background:#ccf1f8;"></div>
<div class="a " style="left:6px;top:148.6px;width:10px;height:10px;background:#fff;border:1px solid #dedddb"></div>
<div class="a " style="left:22px;top:145px;width:1px;height:16px;background:#f1f0ef;"></div>
<div class="a " style="left:46px;top:148.5px;width:10px;height:9px;background:#fff;"></div>
<svg class="a" style="left:45px;top:147px;" width="14" height="12" viewBox="0 0 14 12"><path d="M3.4 6.2L6.3 8.7L12.1 2.1" fill="none" stroke="#0d72b9" stroke-width="2"/></svg>
<span class="t " style="letter-spacing:-0.26px;right:1298.5px;top:147.8px;">41</span>
<span class="t " style="letter-spacing:-1.084px;left:94.25px;top:147.8px;">FSKR</span>
<span class="t " style="letter-spacing:-0.367px;left:134.5px;top:147.8px;">010</span>
<span class="t " style="letter-spacing:-0.26px;right:1193.5px;top:147.8px;">41</span>
<span class="t " style="letter-spacing:-0.160px;left:199.5px;top:147.8px;">FSKR/010/20/41</span>
<span class="t " style="letter-spacing:-0.360px;left:288.5px;top:147.8px;">2020-09-02</span>
<svg class="a" style="left:351px;top:146px;" width="13" height="15" viewBox="0 0 13 15"><path d="M1.5 13.3V1.5H7.6L11.4 5.3V13.3Z" fill="#fff" stroke="#3b3a39" stroke-width="1"/><path d="M7.6 1.5V5.3H11.4" fill="none" stroke="#3b3a39" stroke-width="0.8"/><path d="M3.4 4.4H6" stroke="#a19f9d" stroke-width="0.9"/><rect x="3.2" y="6.6" width="6.6" height="5.6" fill="#2b6fc2"/><rect x="4" y="9.4" width="2.2" height="1.9" fill="#fff"/><rect x="6.9" y="9.4" width="2.2" height="1.9" fill="#fff"/></svg>
<span class="t " style="letter-spacing:-0.389px;left:378px;top:147.8px;">Sprzedaż FSKR/00041/2001O020C</span>
<span class="t " style="letter-spacing:-0.616px;left:555.75px;top:147.8px;">01-O-020-C</span>
<span class="t " style="left:608.5px;top:147.8px;width:100.6px;overflow:hidden;letter-spacing:-0.289px;">Odbiorca 20 dolnośląskie</span>
<span class="t " style="letter-spacing:-0.279px;left:743.5px;top:147.8px;">020-01-01-113</span>
<div class="a " style="left:827px;top:148.6px;width:10px;height:10px;background:#fff;border:1px solid #d2d0ce"></div>
<span class="t " style="letter-spacing:-0.360px;left:853.5px;top:147.8px;">2020-09-03</span>
<div class="a " style="left:933px;top:148.6px;width:10px;height:10px;background:#fff;border:1px solid #d2d0ce"></div>
<span class="t " style="letter-spacing:-0.616px;left:966.5px;top:147.8px;">01-O-020-C</span>
<span class="t " style="left:1019.5px;top:147.8px;width:100.6px;overflow:hidden;letter-spacing:-0.289px;">Odbiorca 20 dolnośląskie</span>
<span class="t " style="letter-spacing:-0.616px;left:1129px;top:147.8px;">01-O-020-C</span>
<span class="t " style="letter-spacing:-0.26px;right:133px;top:147.8px;">17 692.16</span>
<span class="t " style="letter-spacing:-0.26px;right:80.2px;top:147.8px;">1 202.34</span>
<span class="t " style="letter-spacing:-0.26px;right:11px;top:147.8px;">18 894.50</span>
<span class="t " style="left:1381.5px;top:147.8px;width:3px;overflow:hidden;">FSKR</span>
<div class="a " style="left:40px;top:161px;width:49px;height:17px;background:#d6d3ce;"></div>
<div class="a " style="left:89px;top:161px;width:283.5px;height:17px;background:#ffffe1;"></div>
<div class="a " style="left:1186px;top:161px;width:190px;height:17px;background:#ccf1f8;"></div>
<div class="a " style="left:6px;top:164.6px;width:10px;height:10px;background:#fff;border:1px solid #dedddb"></div>
<div class="a " style="left:22px;top:161px;width:1px;height:17px;background:#f1f0ef;"></div>
<div class="a " style="left:46px;top:164.5px;width:10px;height:9px;background:#fff;"></div>
<svg class="a" style="left:45px;top:163px;" width="14" height="12" viewBox="0 0 14 12"><path d="M3.4 6.2L6.3 8.7L12.1 2.1" fill="none" stroke="#0d72b9" stroke-width="2"/></svg>
<span class="t " style="letter-spacing:-0.26px;right:1298.5px;top:164px;">49</span>
<span class="t " style="letter-spacing:-1.084px;left:94.25px;top:164px;">FSKR</span>
<span class="t " style="letter-spacing:-0.367px;left:134.5px;top:164px;">010</span>
<span class="t " style="letter-spacing:-0.26px;right:1193.5px;top:164px;">48</span>
<span class="t " style="letter-spacing:-0.160px;left:199.5px;top:164px;">FSKR/010/20/48</span>
<span class="t " style="letter-spacing:-0.360px;left:288.5px;top:164px;">2020-10-02</span>
<svg class="a" style="left:351px;top:162.2px;" width="13" height="15" viewBox="0 0 13 15"><path d="M1.5 13.3V1.5H7.6L11.4 5.3V13.3Z" fill="#fff" stroke="#3b3a39" stroke-width="1"/><path d="M7.6 1.5V5.3H11.4" fill="none" stroke="#3b3a39" stroke-width="0.8"/><path d="M3.4 4.4H6" stroke="#a19f9d" stroke-width="0.9"/><rect x="3.2" y="6.6" width="6.6" height="5.6" fill="#2b6fc2"/><rect x="4" y="9.4" width="2.2" height="1.9" fill="#fff"/><rect x="6.9" y="9.4" width="2.2" height="1.9" fill="#fff"/></svg>
<span class="t " style="letter-spacing:-0.389px;left:378px;top:164px;">Sprzedaż FSKR/00048/2001O020C</span>
<span class="t " style="letter-spacing:-0.616px;left:555.75px;top:164px;">01-O-020-C</span>
<span class="t " style="left:608.5px;top:164px;width:100.6px;overflow:hidden;letter-spacing:-0.289px;">Odbiorca 20 dolnośląskie</span>
<span class="t " style="letter-spacing:-0.279px;left:743.5px;top:164px;">020-01-01-113</span>
<div class="a " style="left:827px;top:164.6px;width:10px;height:10px;background:#fff;border:1px solid #d2d0ce"></div>
<span class="t " style="letter-spacing:-0.360px;left:853.5px;top:164px;">2020-10-02</span>
<div class="a " style="left:933px;top:164.6px;width:10px;height:10px;background:#fff;border:1px solid #d2d0ce"></div>
<span class="t " style="letter-spacing:-0.616px;left:966.5px;top:164px;">01-O-020-C</span>
<span class="t " style="left:1019.5px;top:164px;width:100.6px;overflow:hidden;letter-spacing:-0.289px;">Odbiorca 20 dolnośląskie</span>
<span class="t " style="letter-spacing:-0.616px;left:1129px;top:164px;">01-O-020-C</span>
<span class="t " style="letter-spacing:-0.26px;right:133px;top:164px;">17 692.16</span>
<span class="t " style="letter-spacing:-0.26px;right:80.2px;top:164px;">1 202.34</span>
<span class="t " style="letter-spacing:-0.26px;right:11px;top:164px;">18 894.50</span>
<span class="t " style="left:1381.5px;top:164px;width:3px;overflow:hidden;">FSKR</span>
<div class="a " style="left:40px;top:178px;width:49px;height:16px;background:#d6d3ce;"></div>
<div class="a " style="left:89px;top:178px;width:283.5px;height:16px;background:#ffffe1;"></div>
<div class="a " style="left:1186px;top:178px;width:190px;height:16px;background:#ccf1f8;"></div>
<div class="a " style="left:6px;top:181px;width:10px;height:10px;background:#fff;border:1px solid #dedddb"></div>
<div class="a " style="left:22px;top:178px;width:1px;height:16px;background:#f1f0ef;"></div>
<div class="a " style="left:46px;top:181.5px;width:10px;height:9px;background:#fff;"></div>
<svg class="a" style="left:45px;top:180px;" width="14" height="12" viewBox="0 0 14 12"><path d="M3.4 6.2L6.3 8.7L12.1 2.1" fill="none" stroke="#0d72b9" stroke-width="2"/></svg>
<span class="t " style="letter-spacing:-0.26px;right:1298.5px;top:180.2px;">22</span>
<span class="t " style="letter-spacing:-1.087px;left:94.25px;top:180.2px;">KSEX</span>
<span class="t " style="letter-spacing:-0.367px;left:134.5px;top:180.2px;">010</span>
<span class="t " style="letter-spacing:-0.26px;right:1193.5px;top:180.2px;">22</span>
<span class="t " style="letter-spacing:-0.125px;left:199.5px;top:180.2px;">KSEX/010/20/22</span>
<span class="t " style="letter-spacing:-0.360px;left:288.5px;top:180.2px;">2020-09-05</span>
<svg class="a" style="left:351px;top:178.5px;" width="13" height="15" viewBox="0 0 13 15"><path d="M1.5 13.3V1.5H7.6L11.4 5.3V13.3Z" fill="#fff" stroke="#3b3a39" stroke-width="1"/><path d="M7.6 1.5V5.3H11.4" fill="none" stroke="#3b3a39" stroke-width="0.8"/><path d="M3.4 4.4H6" stroke="#a19f9d" stroke-width="0.9"/><rect x="3.2" y="6.6" width="6.6" height="5.6" fill="#2b6fc2"/><rect x="4" y="9.4" width="2.2" height="1.9" fill="#fff"/><rect x="6.9" y="9.4" width="2.2" height="1.9" fill="#fff"/></svg>
<span class="t " style="letter-spacing:-0.548px;left:378px;top:180.2px;">Korekta KSEX/USD/00022/20</span>
<span class="t " style="letter-spacing:-0.510px;left:555.75px;top:180.2px;">62-O-252-Z</span>
<span class="t " style="left:608.5px;top:180.2px;width:100.6px;overflow:hidden;letter-spacing:-0.388px;">Odbiorca Szwecja 252 Sweden</span>
<span class="t " style="letter-spacing:-0.224px;left:743.5px;top:180.2px;">252-62-01-111</span>
<div class="a " style="left:827px;top:181px;width:10px;height:10px;background:#fff;border:1px solid #d2d0ce"></div>
<div class="a " style="left:933px;top:181px;width:10px;height:10px;background:#fff;border:1px solid #d2d0ce"></div>
<span class="t " style="letter-spacing:-0.510px;left:966.5px;top:180.2px;">62-O-252-Z</span>
<span class="t " style="left:1019.5px;top:180.2px;width:100.6px;overflow:hidden;letter-spacing:-0.388px;">Odbiorca Szwecja 252 Sweden</span>
<span class="t " style="letter-spacing:-0.510px;left:1129px;top:180.2px;">62-O-252-Z</span>
<span class="t " style="letter-spacing:-0.26px;right:133px;top:180.2px;">-7 661.10</span>
<span class="t " style="letter-spacing:-0.26px;right:80.2px;top:180.2px;">0.00</span>
<span class="t " style="letter-spacing:-0.26px;right:11px;top:180.2px;">-7 661.10</span>
<span class="t " style="left:1381.5px;top:180.2px;width:3px;overflow:hidden;">FSKR</span>
<div class="a " style="left:40px;top:194px;width:49px;height:16px;background:#d6d3ce;"></div>
<div class="a " style="left:89px;top:194px;width:283.5px;height:16px;background:#ffffe1;"></div>
<div class="a " style="left:1186px;top:194px;width:190px;height:16px;background:#ccf1f8;"></div>
<div class="a " style="left:6px;top:197px;width:10px;height:10px;background:#fff;border:1px solid #dedddb"></div>
<div class="a " style="left:22px;top:194px;width:1px;height:16px;background:#f1f0ef;"></div>
<div class="a " style="left:46px;top:197.5px;width:10px;height:9px;background:#fff;"></div>
<svg class="a" style="left:45px;top:196px;" width="14" height="12" viewBox="0 0 14 12"><path d="M3.4 6.2L6.3 8.7L12.1 2.1" fill="none" stroke="#0d72b9" stroke-width="2"/></svg>
<span class="t " style="letter-spacing:-0.26px;right:1298.5px;top:196.5px;">23</span>
<span class="t " style="letter-spacing:-1.087px;left:94.25px;top:196.5px;">KSEX</span>
<span class="t " style="letter-spacing:-0.367px;left:134.5px;top:196.5px;">010</span>
<span class="t " style="letter-spacing:-0.26px;right:1193.5px;top:196.5px;">23</span>
<span class="t " style="letter-spacing:-0.125px;left:199.5px;top:196.5px;">KSEX/010/20/23</span>
<span class="t " style="letter-spacing:-0.289px;left:288.5px;top:196.5px;">2020-09-11</span>
<svg class="a" style="left:351px;top:194.7px;" width="13" height="15" viewBox="0 0 13 15"><path d="M1.5 13.3V1.5H7.6L11.4 5.3V13.3Z" fill="#fff" stroke="#3b3a39" stroke-width="1"/><path d="M7.6 1.5V5.3H11.4" fill="none" stroke="#3b3a39" stroke-width="0.8"/><path d="M3.4 4.4H6" stroke="#a19f9d" stroke-width="0.9"/><rect x="3.2" y="6.6" width="6.6" height="5.6" fill="#2b6fc2"/><rect x="4" y="9.4" width="2.2" height="1.9" fill="#fff"/><rect x="6.9" y="9.4" width="2.2" height="1.9" fill="#fff"/></svg>
<span class="t " style="letter-spacing:-0.548px;left:378px;top:196.5px;">Korekta KSEX/USD/00023/20</span>
<span class="t " style="letter-spacing:-0.510px;left:555.75px;top:196.5px;">44-O-165-Z</span>
<span class="t " style="left:608.5px;top:196.5px;width:100.6px;overflow:hidden;letter-spacing:-0.452px;">Odbiorca Węgry 165 Hungary</span>
<span class="t " style="letter-spacing:-0.279px;left:743.5px;top:196.5px;">165-44-01-114</span>
<div class="a " style="left:827px;top:197px;width:10px;height:10px;background:#fff;border:1px solid #d2d0ce"></div>
<div class="a " style="left:933px;top:197px;width:10px;height:10px;background:#fff;border:1px solid #d2d0ce"></div>
<span class="t " style="letter-spacing:-0.510px;left:966.5px;top:196.5px;">44-O-165-Z</span>
<span class="t " style="left:1019.5px;top:196.5px;width:100.6px;overflow:hidden;letter-spacing:-0.452px;">Odbiorca Węgry 165 Hungary</span>
<span class="t " style="letter-spacing:-0.510px;left:1129px;top:196.5px;">44-O-165-Z</span>
<span class="t " style="letter-spacing:-0.26px;right:133px;top:196.5px;">-6 087.55</span>
<span class="t " style="letter-spacing:-0.26px;right:80.2px;top:196.5px;">0.00</span>
<span class="t " style="letter-spacing:-0.26px;right:11px;top:196.5px;">-6 087.55</span>
<span class="t " style="left:1381.5px;top:196.5px;width:3px;overflow:hidden;">FSKR</span>
<div class="a " style="left:0px;top:145px;width:40px;height:1px;background:#f2f1f0;"></div>
<div class="a " style="left:372.5px;top:145px;width:813.5px;height:1px;background:#f2f1f0;"></div>
<div class="a " style="left:1376px;top:145px;width:8px;height:1px;background:#f2f1f0;"></div>
<div class="a " style="left:40px;top:145px;width:332.5px;height:1px;background:rgba(255,255,255,.45);"></div>
<div class="a " style="left:1186px;top:145px;width:190px;height:1px;background:rgba(255,255,255,.45);"></div>
<div class="a " style="left:0px;top:161px;width:40px;height:1px;background:#f2f1f0;"></div>
<div class="a " style="left:372.5px;top:161px;width:813.5px;height:1px;background:#f2f1f0;"></div>
<div class="a " style="left:1376px;top:161px;width:8px;height:1px;background:#f2f1f0;"></div>
<div class="a " style="left:40px;top:161px;width:332.5px;height:1px;background:rgba(255,255,255,.45);"></div>
<div class="a " style="left:1186px;top:161px;width:190px;height:1px;background:rgba(255,255,255,.45);"></div>
<div class="a " style="left:0px;top:178px;width:40px;height:1px;background:#f2f1f0;"></div>
<div class="a " style="left:372.5px;top:178px;width:813.5px;height:1px;background:#f2f1f0;"></div>
<div class="a " style="left:1376px;top:178px;width:8px;height:1px;background:#f2f1f0;"></div>
<div class="a " style="left:40px;top:178px;width:332.5px;height:1px;background:rgba(255,255,255,.45);"></div>
<div class="a " style="left:1186px;top:178px;width:190px;height:1px;background:rgba(255,255,255,.45);"></div>
<div class="a " style="left:0px;top:194px;width:40px;height:1px;background:#f2f1f0;"></div>
<div class="a " style="left:372.5px;top:194px;width:813.5px;height:1px;background:#f2f1f0;"></div>
<div class="a " style="left:1376px;top:194px;width:8px;height:1px;background:#f2f1f0;"></div>
<div class="a " style="left:40px;top:194px;width:332.5px;height:1px;background:rgba(255,255,255,.45);"></div>
<div class="a " style="left:1186px;top:194px;width:190px;height:1px;background:rgba(255,255,255,.45);"></div>
<div class="a " style="left:0px;top:210px;width:40px;height:1px;background:#f2f1f0;"></div>
<div class="a " style="left:372.5px;top:210px;width:813.5px;height:1px;background:#f2f1f0;"></div>
<div class="a " style="left:1376px;top:210px;width:8px;height:1px;background:#f2f1f0;"></div>
<div class="a " style="left:40px;top:210px;width:332.5px;height:1px;background:rgba(255,255,255,.45);"></div>
<div class="a " style="left:1186px;top:210px;width:190px;height:1px;background:rgba(255,255,255,.45);"></div>
<div class="a " style="left:0px;top:162px;width:1384px;height:1px;background:#1173b7;"></div>
<div class="a " style="left:0px;top:176px;width:1384px;height:2px;background:#1173b7;"></div>
<div class="a " style="left:194px;top:162px;width:1.4px;height:15px;background:#1173b7;"></div>
<div class="a " style="left:282px;top:162px;width:1.4px;height:15px;background:#1173b7;"></div>
<div class="a " style="left:0px;top:307px;width:1384px;height:1px;background:#e3e1df;"></div>
<div class="a " style="left:9px;top:310px;width:800px;height:6px;background:#e1e1e1;"></div>
<svg class="a" style="left:1px;top:308px;" width="8" height="10" viewBox="0 0 8 10"><path d="M5.6 1.8L2.4 5L5.6 8.2" fill="none" stroke="#d8d6d4" stroke-width="0.9"/></svg>
<svg class="a" style="left:1375px;top:308px;" width="8" height="10" viewBox="0 0 8 10"><path d="M2.4 1.8L5.6 5L2.4 8.2" fill="none" stroke="#d8d6d4" stroke-width="0.9"/></svg>
<div class="a " style="left:0px;top:318px;width:1384px;height:53px;background:#faf9f8;"></div>
<div class="a " style="left:0px;top:343px;width:1384px;height:1px;background:#e3e1df;"></div>
<div class="a " style="left:0px;top:370px;width:1384px;height:1px;background:#e3e1df;"></div>
<svg class="a" style="left:9px;top:326px;" width="8" height="14" viewBox="0 0 8 14"><g fill="#484644"><rect x="2.6" y="1.6" width="1.5" height="1.5"/><rect x="2.6" y="5.2" width="1.5" height="1.5"/><rect x="2.6" y="8.8" width="1.5" height="1.5"/></g></svg>
<span class="t " style="letter-spacing:-0.387px;left:35.7px;top:326.7px;color:#484644">Dokument</span>
<span class="t " style="letter-spacing:-0.454px;left:98.7px;top:326.7px;color:#484644">Dowód</span>
<span class="t " style="letter-spacing:-0.253px;left:148.8px;top:326.7px;color:#484644">Dowód z wymiarami kontrolingowymi</span>
<span class="t " style="letter-spacing:-0.497px;font-weight:bold;left:318.8px;top:326.7px;color:#201f1e">Historia operacji</span>
<div class="a " style="left:307.8px;top:341px;width:90px;height:2.4px;background:#0a7dcc;"></div>
<svg class="a" style="left:0px;top:344px;" width="40" height="26" viewBox="0 0 40 26"><path d="M10.6 10.8V7.1H17.7V10.8" fill="none" stroke="#4a4846"/><rect x="7.9" y="10.8" width="12.6" height="5.8" rx="1.2" fill="none" stroke="#4a4846"/><rect x="10.6" y="14.2" width="7.2" height="5" fill="#faf9f8" stroke="#4a4846"/><path d="M12 16.8H16.4" stroke="#8a8886" stroke-width="1.2"/><path d="M9.2 12.5H10.8" stroke="#2f8fe0" stroke-width="0.9"/></svg>
<svg class="a" style="left:25.6px;top:353px;" width="8" height="8" viewBox="0 0 8 8"><path d="M1.7 2.8 L4 5.2 L6.3 2.8" fill="none" stroke="#323130" stroke-width="1.2"/></svg>
<svg class="a" style="left:0px;top:344px;" width="1384" height="26" viewBox="0 0 1384 26"><rect x="1201.5" y="11.3" width="2.6" height="7.2" fill="#8fd8a6" stroke="#21a84a" stroke-width="0.9"/><rect x="1206" y="6.8" width="2.6" height="11.7" fill="#fbd79a" stroke="#f08a24" stroke-width="0.9"/><rect x="1210.6" y="9.9" width="2.6" height="8.6" fill="#f7b4b4" stroke="#e8282c" stroke-width="0.9"/><path d="M1239 17.6H1233.5V6.9H1245.5V11" fill="none" stroke="#4a4846"/><path d="M1233.5 8.9H1245.5" stroke="#4a4846" stroke-width="0.9"/><circle cx="1242" cy="14" r="2.3" fill="none" stroke="#4a4846"/><path d="M1243.66 15.656L1246.4 18.4" stroke="#4a4846"/><path d="M1292.7 12A5.3 5.3 0 0 1 1302.88 10.3" fill="none" stroke="#4a4846"/><path d="M1303.9 6.4V10.2H1300.1" fill="none" stroke="#4a4846"/><path d="M1303.3 13.2A5.3 5.3 0 0 1 1293.12 14.9" fill="none" stroke="#4a4846"/><path d="M1292.1 18.8V15H1295.9" fill="none" stroke="#4a4846"/><path d="M1323.5 18.2H1317.8V7H1328.9V12.7" fill="none" stroke="#4a4846"/><rect x="1318.3" y="7.5" width="10.2" height="2.2" fill="#a19f9d"/><circle cx="1326.9" cy="16.7" r="2" fill="none" stroke="#4a4846" stroke-width="0.9"/><path d="M1328.75 17.47L1329.86 17.92M1327.67 18.55L1328.12 19.66M1326.13 18.55L1325.68 19.66M1325.05 17.47L1323.94 17.92M1325.05 15.93L1323.94 15.48M1326.13 14.85L1325.68 13.74M1327.67 14.85L1328.12 13.74M1328.75 15.93L1329.86 15.48" stroke="#4a4846" stroke-width="1.17" fill="none"/><path d="M1351.6 8.4V17.6" stroke="#d6d4d2"/><circle cx="1367" cy="12.6" r="3.2" fill="none" stroke="#4a4846"/><path d="M1369.3 14.904L1373.8 19.2" stroke="#4a4846"/><path d="M1368.6 7H1375.6" stroke="#3a96e0" stroke-width="1"/><path d="M1371 8.8H1375.6M1372.6 10.6H1375.6" stroke="#7fbbea" stroke-width="1"/><path d="M1348.5 26V21.5a1 1 0 0 1 1-1H1363a1 1 0 0 1 1 1V26" fill="#f3f2f1" stroke="#e6e4e2" stroke-width="0.8"/><path d="M1353.8 22L1356.2 24.4L1358.6 22" fill="none" stroke="#c8c6c4" stroke-width="0.8"/></svg>
<svg class="a" style="left:1216.8px;top:353px;" width="8" height="8" viewBox="0 0 8 8"><path d="M1.7 2.8 L4 5.2 L6.3 2.8" fill="none" stroke="#323130" stroke-width="1.2"/></svg>
<svg class="a" style="left:1333px;top:353px;" width="8" height="8" viewBox="0 0 8 8"><path d="M1.7 2.8 L4 5.2 L6.3 2.8" fill="none" stroke="#323130" stroke-width="1.2"/></svg>
<span class="t m" style="letter-spacing:-0.352px;left:1248.6px;top:350.6px;">Podgląd</span>
<div class="a " style="left:0px;top:371px;width:1384px;height:33px;background:#faf9f8;"></div>
<div class="a " style="left:0px;top:403px;width:1384px;height:1.4px;background:#d4d2d0;"></div>
<div class="a " style="left:39.5px;top:387px;width:248px;height:1px;background:#ebeae8;"></div>
<div class="a " style="left:40px;top:371px;width:1px;height:32px;background:#ebeae8;"></div>
<div class="a " style="left:288px;top:371px;width:1px;height:32px;background:#ebeae8;"></div>
<div class="a " style="left:1013px;top:371px;width:1px;height:32px;background:#ebeae8;"></div>
<div class="a " style="left:1255px;top:371px;width:1px;height:32px;background:#ebeae8;"></div>
<div class="a " style="left:1373px;top:371px;width:1px;height:32px;background:#ebeae8;"></div>
<div class="a " style="left:128px;top:388px;width:1px;height:15px;background:#ebeae8;"></div>
<div class="a " style="left:201px;top:388px;width:1px;height:15px;background:#ebeae8;"></div>
<span class="t m" style="letter-spacing:-0.454px;left:43.4px;top:373.8px;color:#323130">Dowód</span>
<span class="t " style="letter-spacing:-0.608px;font-weight:bold;left:291px;top:373.8px;color:#201f1e">Operacja</span>
<span class="t m" style="letter-spacing:-0.238px;left:1017.2px;top:373.8px;color:#323130">Komentarz</span>
<span class="t m" style="letter-spacing:-1.272px;left:43.4px;top:389.8px;color:#323130">Rd</span>
<span class="t m" style="letter-spacing:-0.861px;left:132.4px;top:389.8px;color:#323130">ND</span>
<span class="t m" style="letter-spacing:-0.517px;left:204.6px;top:389.8px;color:#323130">Data</span>
<div class="a " style="left:6px;top:392px;width:10px;height:10px;background:#fff;border:1px solid #c2c0be"></div>
<svg class="a" style="left:1374px;top:381px;" width="10" height="12" viewBox="0 0 10 12"><path d="M6.6 2.6L3.4 6L6.6 9.4" fill="none" stroke="#d0cecc" stroke-width="0.9"/></svg>
<div class="a " style="left:40px;top:404px;width:89px;height:16px;background:#ffffe1;"></div>
<div class="a " style="left:129px;top:404px;width:72px;height:16px;background:#ffffe1;"></div>
<div class="a " style="left:201px;top:404px;width:87px;height:16px;background:#ffffe1;"></div>
<div class="a " style="left:6px;top:408px;width:10px;height:10px;background:#fff;border:1px solid #dedddb"></div>
<div class="a " style="left:21px;top:404px;width:1px;height:16px;background:#f1f0ef;"></div>
<span class="t " style="letter-spacing:-1.009px;left:45.4px;top:406.7px;">FSKR</span>
<span class="t " style="letter-spacing:-0.26px;right:1186px;top:406.7px;">48</span>
<span class="t " style="letter-spacing:-0.360px;left:206.6px;top:406.7px;">2020-10-02</span>
<span class="t " style="letter-spacing:-0.26px;left:292.8px;top:406.7px;">changeKliLogoVRejId</span>
<span class="t " style="letter-spacing:-0.347px;left:1019.3px;top:406.7px;">Zmiana KliLogoVRejId: 2200051861 -&gt; 2200062500</span>
<div class="a " style="left:40px;top:420px;width:89px;height:16px;background:#ffffe1;"></div>
<div class="a " style="left:129px;top:420px;width:72px;height:16px;background:#ffffe1;"></div>
<div class="a " style="left:201px;top:420px;width:87px;height:16px;background:#ffffe1;"></div>
<div class="a " style="left:6px;top:424px;width:10px;height:10px;background:#fff;border:1px solid #dedddb"></div>
<div class="a " style="left:21px;top:420px;width:1px;height:16px;background:#f1f0ef;"></div>
<span class="t " style="letter-spacing:-1.009px;left:45.4px;top:422.7px;">FSKR</span>
<span class="t " style="letter-spacing:-0.26px;right:1186px;top:422.7px;">48</span>
<span class="t " style="letter-spacing:-0.360px;left:206.6px;top:422.7px;">2020-10-02</span>
<span class="t " style="letter-spacing:-0.26px;left:292.8px;top:422.7px;">nadajnd</span>
<div class="a " style="left:40px;top:436px;width:89px;height:16px;background:#ffffe1;"></div>
<div class="a " style="left:129px;top:436px;width:72px;height:16px;background:#ecf0f1;"></div>
<div class="a " style="left:201px;top:436px;width:87px;height:16px;background:#ffffe1;"></div>
<div class="a " style="left:6px;top:440px;width:10px;height:10px;background:#fff;border:1px solid #dedddb"></div>
<div class="a " style="left:21px;top:436px;width:1px;height:16px;background:#f1f0ef;"></div>
<span class="t " style="letter-spacing:-1.009px;left:45.4px;top:438.7px;">FSKR</span>
<span class="t " style="letter-spacing:-0.26px;right:1186px;top:438.7px;">0</span>
<span class="t " style="letter-spacing:-0.360px;left:206.6px;top:438.7px;">2020-10-02</span>
<span class="t " style="letter-spacing:-0.26px;left:292.8px;top:438.7px;">modify</span>
<div class="a " style="left:40px;top:452px;width:89px;height:17px;background:#ffffe1;"></div>
<div class="a " style="left:129px;top:452px;width:72px;height:17px;background:#ecf0f1;"></div>
<div class="a " style="left:201px;top:452px;width:87px;height:17px;background:#ffffe1;"></div>
<div class="a " style="left:6px;top:456px;width:10px;height:10px;background:#fff;border:1px solid #dedddb"></div>
<div class="a " style="left:21px;top:452px;width:1px;height:17px;background:#f1f0ef;"></div>
<span class="t " style="letter-spacing:-0.26px;left:292.8px;top:455px;">CPV</span>
<span class="t " style="letter-spacing:-0.388px;left:1019.3px;top:455px;">0;2020-09-03 00:00:00</span>
<div class="a " style="left:40px;top:469px;width:89px;height:16px;background:#ffffe1;"></div>
<div class="a " style="left:129px;top:469px;width:72px;height:16px;background:#ecf0f1;"></div>
<div class="a " style="left:201px;top:469px;width:87px;height:16px;background:#ffffe1;"></div>
<div class="a " style="left:6px;top:473px;width:10px;height:10px;background:#fff;border:1px solid #dedddb"></div>
<div class="a " style="left:21px;top:469px;width:1px;height:16px;background:#f1f0ef;"></div>
<span class="t " style="letter-spacing:-1.009px;left:45.4px;top:471.2px;">FSKR</span>
<span class="t " style="letter-spacing:-0.26px;right:1186px;top:471.2px;">0</span>
<span class="t " style="letter-spacing:-0.360px;left:206.6px;top:471.2px;">2020-10-02</span>
<span class="t " style="letter-spacing:-0.26px;left:292.8px;top:471.2px;">insert</span>
<div class="a " style="left:0px;top:420px;width:40px;height:1px;background:#f2f1f0;"></div>
<div class="a " style="left:288px;top:420px;width:1096px;height:1px;background:#f2f1f0;"></div>
<div class="a " style="left:40px;top:420px;width:248px;height:1px;background:rgba(255,255,255,.45);"></div>
<div class="a " style="left:0px;top:436px;width:40px;height:1px;background:#f2f1f0;"></div>
<div class="a " style="left:288px;top:436px;width:1096px;height:1px;background:#f2f1f0;"></div>
<div class="a " style="left:40px;top:436px;width:248px;height:1px;background:rgba(255,255,255,.45);"></div>
<div class="a " style="left:0px;top:452px;width:40px;height:1px;background:#f2f1f0;"></div>
<div class="a " style="left:288px;top:452px;width:1096px;height:1px;background:#f2f1f0;"></div>
<div class="a " style="left:40px;top:452px;width:248px;height:1px;background:rgba(255,255,255,.45);"></div>
<div class="a " style="left:0px;top:469px;width:40px;height:1px;background:#f2f1f0;"></div>
<div class="a " style="left:288px;top:469px;width:1096px;height:1px;background:#f2f1f0;"></div>
<div class="a " style="left:40px;top:469px;width:248px;height:1px;background:rgba(255,255,255,.45);"></div>
<div class="a " style="left:0px;top:485px;width:40px;height:1px;background:#f2f1f0;"></div>
<div class="a " style="left:288px;top:485px;width:1096px;height:1px;background:#f2f1f0;"></div>
<div class="a " style="left:40px;top:485px;width:248px;height:1px;background:rgba(255,255,255,.45);"></div>
<div class="a " style="left:287px;top:405px;width:130px;height:16px;background:#fff;border:2px solid #2a80bf;border-bottom-color:#1173b7"></div>
<span class="t " style="letter-spacing:-0.362px;left:292.8px;top:406.7px;">changeKliLogoVRejId</span>
<div class="a" style="left:378px;top:163.3px;width:628px;height:464.3px;background:#fff;border-top:2px solid #0a88d3;border-left:5px solid #0a88d3;border-radius:2.5px;box-shadow:1px 2px 8px rgba(0,0,0,0.38)"></div>
<span class="t " style="letter-spacing:-0.293px;font-size:11.2px;left:401.4px;top:173.2px;color:#111;-webkit-text-stroke:0.42px currentColor;line-height:14px;height:14px;margin-top:-1px">Zmień dane adresowe kontrahenta</span>
<svg class="a" style="left:986px;top:172px;" width="13" height="13" viewBox="0 0 13 13"><path d="M2 2L11 11M11 2L2 11" stroke="#b3b0ad" stroke-width="1.25"/></svg>
<span class="t " style="letter-spacing:-0.670px;font-weight:bold;left:411.5px;top:207.8px;color:#201f1e">Nabywca</span>
<span class="t " style="letter-spacing:-0.319px;left:471.5px;top:207.8px;color:#605e5c">Odbiorca</span>
<span class="t " style="letter-spacing:-0.145px;left:532px;top:207.8px;color:#605e5c">Płatnik</span>
<div class="a " style="left:399.5px;top:223px;width:600.5px;height:1px;background:#e3e1df;"></div>
<div class="a " style="left:410px;top:220.6px;width:39px;height:2.2px;background:#0a7dcc;"></div>
<span class="t " style="letter-spacing:-0.409px;left:414.4px;top:238.2px;">Logo</span>
<div class="a in" style="left:439px;top:236px;width:104.5px;height:15.6px;"></div>
<span class="t " style="letter-spacing:-0.616px;left:442.6px;top:237.9px;">01-O-020-C</span>
<span class="t " style="letter-spacing:-0.333px;left:717.6px;top:238.2px;">Wersja danych adresowych</span>
<div class="a " style="left:830.2px;top:236px;width:94.5px;height:15.6px;background:#fef4e6;border:1px solid #e2d3c0"></div>
<span class="t " style="letter-spacing:-0.284px;right:474.5px;top:238.3px;">2200062500</span>
<svg class="a" style="left:914.5px;top:240.6px;" width="8" height="8" viewBox="0 0 8 8"><path d="M1.8 2.85 L4 5.15 L6.2 2.85" fill="none" stroke="#d9825a" stroke-width="0.8"/></svg>
<span class="t m" style="letter-spacing:-0.250px;left:413.8px;top:276px;-webkit-text-stroke:0.3px currentColor">Aktualne dane</span>
<span class="t m" style="letter-spacing:-0.396px;left:714.4px;top:276px;-webkit-text-stroke:0.3px currentColor">Nowe dane</span>
<div class="a " style="left:414px;top:291.6px;width:276px;height:271px;border:1px solid #eeedec"></div>
<div class="a " style="left:714px;top:291.6px;width:276px;height:271px;border:1px solid #eeedec"></div>
<div class="a " style="left:430.3px;top:488.2px;width:233.8px;height:62.6px;border:1px solid #eeedec"></div>
<div class="a " style="left:730.3px;top:488.2px;width:243px;height:62.6px;border:1px solid #eeedec"></div>
<span class="t " style="letter-spacing:-0.296px;right:896.7px;top:306.6px;">Nazwa krótka</span>
<div class="a in" style="left:492.4px;top:305px;width:180.8px;height:15.6px;"></div>
<span class="t " style="letter-spacing:-0.296px;left:496px;top:306.9px;">Odbiorca 20</span>
<span class="t " style="letter-spacing:-0.296px;right:596.6px;top:306.6px;">Nazwa krótka</span>
<div class="a in" style="left:792.4px;top:305px;width:180.8px;height:15.6px;"></div>
<span class="t " style="letter-spacing:-0.357px;right:896.7px;top:327.7px;">Nazwa pełna</span>
<div class="a in" style="left:492.4px;top:326px;width:180.8px;height:15.6px;"></div>
<span class="t " style="letter-spacing:-0.190px;left:496px;top:327.9px;">dolnośląskie</span>
<span class="t " style="letter-spacing:-0.357px;right:596.6px;top:327.7px;">Nazwa pełna</span>
<div class="a in" style="left:792.4px;top:326px;width:180.8px;height:15.6px;"></div>
<span class="t " style="letter-spacing:-0.423px;right:896.7px;top:348.8px;">Ulica</span>
<div class="a in" style="left:492.4px;top:347px;width:180.8px;height:15.6px;"></div>
<span class="t " style="letter-spacing:-0.244px;left:496px;top:348.9px;">Kossaka Juliusza</span>
<span class="t " style="letter-spacing:-0.423px;right:596.6px;top:348.8px;">Ulica</span>
<div class="a in" style="left:792.4px;top:347px;width:180.8px;height:15.6px;"></div>
<span class="t " style="letter-spacing:-0.418px;right:896.7px;top:369.9px;">Nr domu</span>
<div class="a in" style="left:492.4px;top:368px;width:75.4px;height:15.6px;"></div>
<span class="t " style="letter-spacing:-0.284px;left:496px;top:369.9px;">37</span>
<span class="t " style="letter-spacing:-0.418px;right:596.6px;top:369.9px;">Nr domu</span>
<div class="a in" style="left:792.4px;top:368px;width:75.4px;height:15.6px;"></div>
<span class="t " style="letter-spacing:-0.276px;right:896.7px;top:391px;">Nr lokalu</span>
<div class="a in" style="left:492.4px;top:389px;width:75.4px;height:15.6px;"></div>
<span class="t " style="letter-spacing:-0.276px;right:596.6px;top:391px;">Nr lokalu</span>
<div class="a in" style="left:792.4px;top:389px;width:75.4px;height:15.6px;"></div>
<span class="t " style="letter-spacing:-0.304px;right:896.7px;top:412.1px;">Kod pocztowy</span>
<div class="a in" style="left:492.4px;top:410px;width:75.4px;height:15.6px;"></div>
<span class="t " style="letter-spacing:-0.347px;left:496px;top:411.9px;">51-630</span>
<span class="t " style="letter-spacing:-0.304px;right:596.6px;top:412.1px;">Kod pocztowy</span>
<div class="a in" style="left:792.4px;top:410px;width:75.4px;height:15.6px;"></div>
<span class="t " style="letter-spacing:-0.168px;right:896.7px;top:433.2px;">Miejscowość</span>
<div class="a in" style="left:492.4px;top:431px;width:180.8px;height:15.6px;"></div>
<span class="t " style="letter-spacing:-0.250px;left:496px;top:432.9px;">Wrocław</span>
<span class="t " style="letter-spacing:-0.168px;right:596.6px;top:433.2px;">Miejscowość</span>
<div class="a in" style="left:792.4px;top:431px;width:180.8px;height:15.6px;"></div>
<span class="t " style="letter-spacing:-0.349px;right:896.7px;top:454.3px;">Kraj</span>
<div class="a in" style="left:492.4px;top:452px;width:47.2px;height:15.6px;"></div>
<span class="t " style="letter-spacing:-0.560px;left:496px;top:453.9px;">PL</span>
<span class="t " style="letter-spacing:-0.349px;right:596.6px;top:454.3px;">Kraj</span>
<div class="a in" style="left:792.4px;top:452px;width:47.2px;height:15.6px;"></div>
<span class="t " style="letter-spacing:-0.779px;left:446.4px;top:525px;">NIP</span>
<div class="a in" style="left:465.8px;top:523.1px;width:39.9px;height:15.6px;"></div>
<div class="a in" style="left:510.2px;top:523.1px;width:137.6px;height:15.6px;"></div>
<span class="t " style="letter-spacing:-0.317px;left:513.8px;top:525px;">020-01-01-113</span>
<div class="a " style="left:766.1px;top:504.8px;width:9.6px;height:9.6px;background:#fff;border:1px solid #c8c6c4"></div>
<span class="t " style="letter-spacing:-0.306px;left:780.7px;top:503.7px;">Zmień NIP (zgodnie z danymi adresowymi)</span>
<svg class="a" style="left:730px;top:517px;" width="230" height="32" viewBox="0 0 230 32"><rect x="3.4" y="3.8" width="221.2" height="23.2" fill="none" stroke="#e5202e" stroke-width="2.4"/></svg>
<span class="t " style="letter-spacing:-0.779px;left:746.5px;top:525px;">NIP</span>
<div class="a " style="left:765.8px;top:523.1px;width:39.8px;height:15.6px;background:#fff;border:1px solid #3d8fd0;outline:1px dotted #0f4c81;outline-offset:-1px"></div>
<span class="t " style="letter-spacing:-1.060px;left:769.6px;top:525.1px;">PL</span>
<div class="a " style="left:780px;top:526px;width:0.9px;height:10px;background:#000;"></div>
<div class="a in" style="left:810.2px;top:523.1px;width:137.6px;height:15.6px;background:#fff"></div>
<span class="t " style="letter-spacing:-0.317px;left:813.8px;top:525px;">020-01-01-113</span>
<div class="a " style="left:844.1px;top:596.1px;width:73px;height:19.7px;background:#0672b6;border-radius:1px"></div>
<span class="t w" style="letter-spacing:-0.26px;left:844.1px;width:73px;text-align:center;top:600px;">OK</span>
<div class="a " style="left:925.3px;top:596.1px;width:72.4px;height:19.7px;background:#fff;border:1px solid #c8c6c4;border-radius:1px"></div>
<span class="t " style="letter-spacing:-0.26px;left:925.3px;width:72.4px;text-align:center;top:600px;">Anuluj</span>
<svg class="a" style="left:400px;top:598px;" width="18" height="18" viewBox="0 0 18 18"><path d="M11.86 8.61L11.86 10.99L10.51 11.01L9.70 12.41L10.36 13.59L8.30 14.78L7.61 13.61L5.99 13.61L5.30 14.78L3.24 13.59L3.90 12.41L3.09 11.01L1.74 10.99L1.74 8.61L3.09 8.59L3.90 7.19L3.24 6.01L5.30 4.82L5.99 5.99L7.61 5.99L8.30 4.82L10.36 6.01L9.70 7.19L10.51 8.59Z" fill="none" stroke="#252423" stroke-width="0.8" stroke-linejoin="round"/><circle cx="6.8" cy="9.8" r="1.9" fill="none" stroke="#252423" stroke-width="0.8"/><path d="M15.03 3.71L15.03 4.89L14.12 4.83L13.76 5.44L14.28 6.20L13.25 6.79L12.85 5.96L12.15 5.96L11.75 6.79L10.72 6.20L11.24 5.44L10.88 4.83L9.97 4.89L9.97 3.71L10.88 3.77L11.24 3.16L10.72 2.40L11.75 1.81L12.15 2.64L12.85 2.64L13.25 1.81L14.28 2.40L13.76 3.16L14.12 3.77Z" fill="none" stroke="#252423" stroke-width="0.8" stroke-linejoin="round"/></svg>
<svg class="a" style="left:420.2px;top:602.2px;" width="8" height="8" viewBox="0 0 8 8"><path d="M1.7 2.8 L4 5.2 L6.3 2.8" fill="none" stroke="#323130" stroke-width="1.2"/></svg>
</body></html>
